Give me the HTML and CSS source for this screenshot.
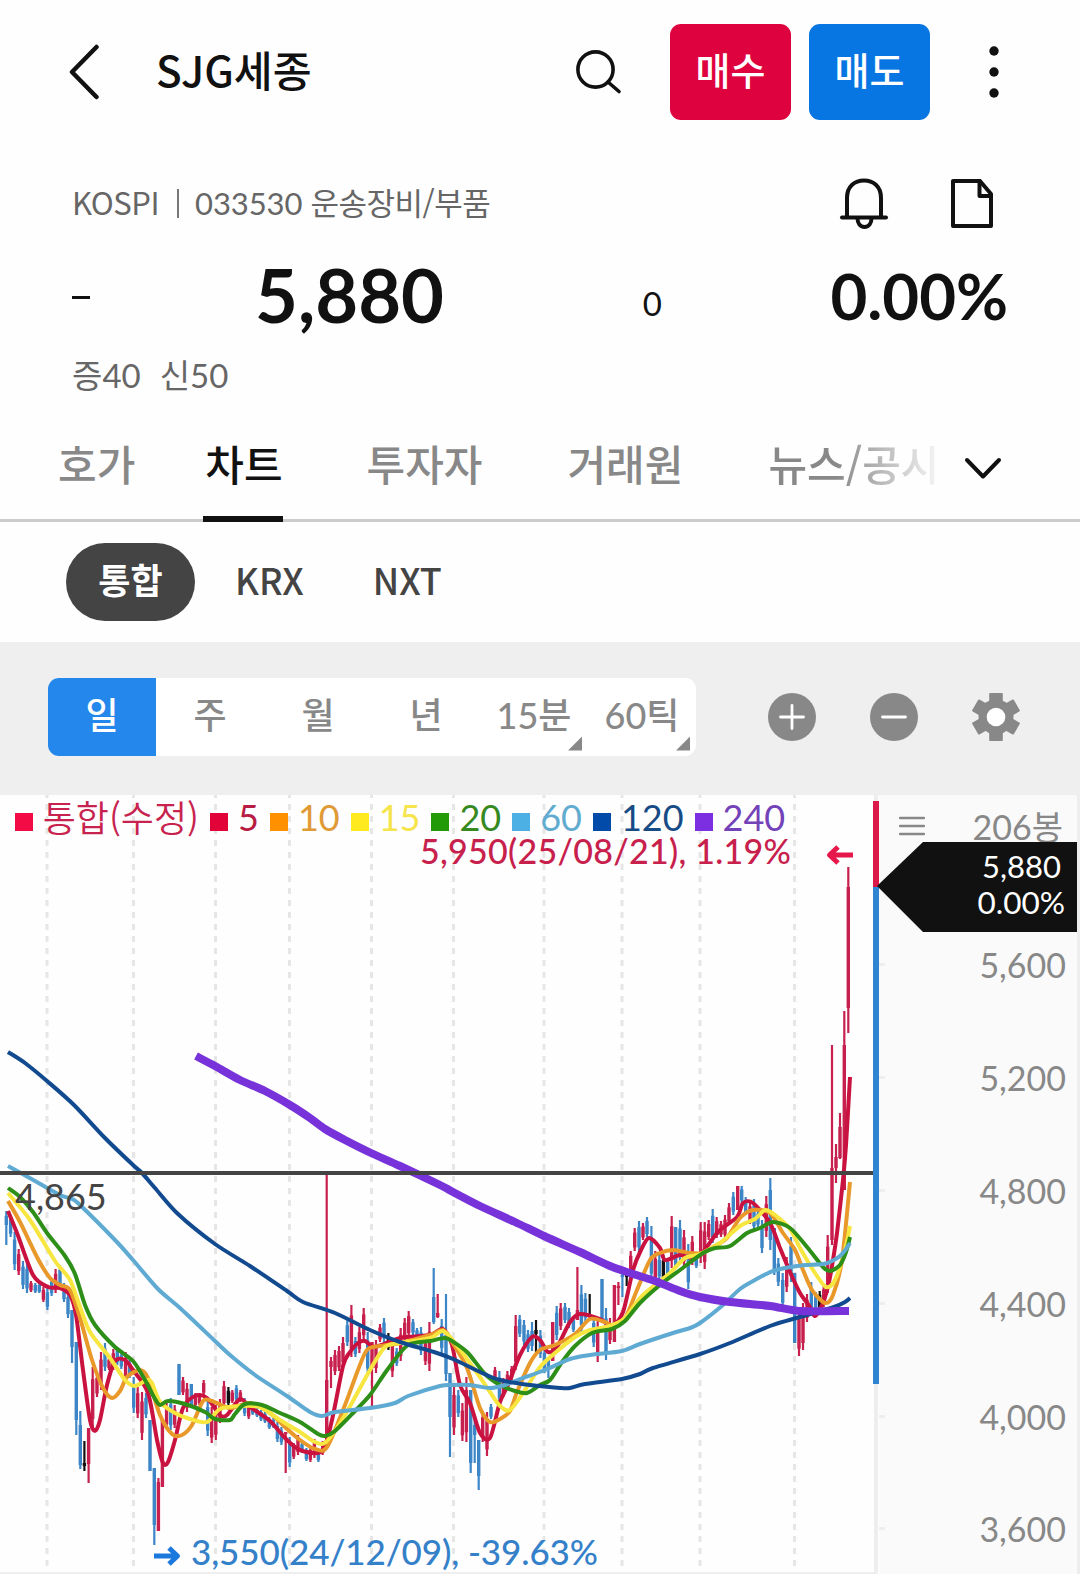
FILE: index.html
```html
<!DOCTYPE html>
<html lang="ko">
  <head>
    <meta charset="UTF-8" />
    <meta name="viewport" content="width=device-width, initial-scale=1.0" />
    <title>SJG세종 - 차트</title>
    <link rel="stylesheet" href="styles.css">
  </head>
  <body>
    <!-- Top bar -->
    <header class="topbar">
      <svg class="back" width="32" height="56" viewBox="0 0 32 56">
        <path d="M28.5 3 L4 28 L28.5 53" />
      </svg>
      <h1 class="title">SJG세종</h1>
      <svg class="search" width="50" height="50" viewBox="0 0 50 50">
        <circle cx="22.5" cy="22.5" r="17.6" />
        <path d="M35 35 L46 44.5" />
      </svg>
      <button class="order buy">매수</button>
      <button class="order sell">매도</button>
      <svg class="more" width="12" height="56" viewBox="0 0 12 56">
        <circle cx="6" cy="7" r="4.7" />
        <circle cx="6" cy="28" r="4.7" />
        <circle cx="6" cy="49" r="4.7" />
      </svg>
    </header>

    <!-- Stock summary -->
    <section class="summary">
      <div class="info">
        <span>KOSPI</span>
        <span class="bar"></span>
        <span><span class="num">033530</span> 운송장비/부품</span>
        <svg class="bell" width="50" height="54" viewBox="0 0 50 54">
          <path d="M8 40 V21 C8 9 16 3.5 25 3.5 S42 9 42 21 V40" />
          <path d="M3 40.5 H47" />
          <path d="M18.5 41 C18.5 46 21 50 25.5 50 S32.5 46 32.5 41" />
        </svg>
        <svg class="note" width="46" height="54" viewBox="0 0 46 54">
          <path d="M4 4 H31 L42 17 V49 H4 Z" />
          <path d="M30.5 4 V19 H42" />
        </svg>
      </div>
      <div class="price-row">
        <span class="dash"></span>
        <span class="price">5,880</span>
        <span class="diff">0</span>
        <span class="rate">0.00%</span>
      </div>
      <div class="margin-row">
        <span>증<span class="num">40</span></span>
        <span>신<span class="num">50</span></span>
      </div>
    </section>

    <!-- Tabs -->
    <nav class="tabs">
      <a class="tab">호가</a>
      <a class="tab active">차트</a>
      <a class="tab">투자자</a>
      <a class="tab">거래원</a>
      <a class="tab fade">뉴스/공시</a>
      <svg class="expand" width="38" height="24" viewBox="0 0 38 24">
        <path d="M3 3 L19 19.5 L35 3" />
      </svg>
    </nav>

    <div class="markets">
      <span class="market on">통합</span>
      <span class="market">KRX</span>
      <span class="market">NXT</span>
    </div>

    <!-- Period toolbar -->
    <div class="toolbar">
      <div class="periods">
        <span class="period on">일</span>
        <span class="period">주</span>
        <span class="period">월</span>
        <span class="period">년</span>
        <span class="period more-opt"><span class="num">15</span>분</span>
        <span class="period more-opt"><span class="num">60</span>틱</span>
      </div>
      <svg class="tool" width="50" height="50" viewBox="-25 -25 50 50">
        <circle r="24" />
        <path d="M-11.5 0 H11.5 M0 -11.5 V11.5" />
      </svg>
      <svg class="tool" width="50" height="50" viewBox="-25 -25 50 50">
        <circle r="24" />
        <path d="M-11.5 0 H11.5" />
      </svg>
      <svg class="tool gear" width="50" height="50" viewBox="-25 -25 50 50">
        <circle r="17.5" />
        <g id="tooth">
          <rect x="-6.8" y="-24" width="13.6" height="48" rx="1" />
        </g>
        <use href="#tooth" transform="rotate(60)" />
        <use href="#tooth" transform="rotate(120)" />
        <circle class="hole" r="9.3" />
      </svg>
    </div>

    <!-- Chart -->
    <main class="chart">
      <svg class="plot" width="879" height="779" viewBox="0 795 879 779">
        <path class="grid" d="M47 795V1574M133.5 795V1574M215.5 795V1574M289.5 795V1574M371.5 795V1574M453.5 795V1574M544 795V1574M622 795V1574M700 795V1574M794.5 795V1574" />
        <path class="frame" d="M876 795V1574M0 1574H876" />
        <g id="candles"></g>
        <g id="averages"></g>

        <path class="level" d="M0 1173H876" />
        <path class="range up" d="M876 801V887" />
        <path class="range down" d="M876 887V1384" />

        <text class="level-text" x="15" y="1210">4,865</text>
        <text class="high-text" x="420" y="864" textLength="371">5,950(25/08/21), 1.19%</text>
        <path class="arrow high" d="M853 855H830M838 847L829.5 855L838 863" />
        <text class="low-text" x="191" y="1565" textLength="407">3,550(24/12/09), -39.63%</text>
        <path class="arrow low" d="M154 1556H177M169 1548L177.5 1556L169 1564" />
      </svg>

      <div class="legend">
        <span class="key all"><i></i>통합(수정)</span>
        <span class="key k5"><i></i>5</span>
        <span class="key k10"><i></i>10</span>
        <span class="key k15"><i></i>15</span>
        <span class="key k20"><i></i>20</span>
        <span class="key k60"><i></i>60</span>
        <span class="key k120"><i></i>120</span>
        <span class="key k240"><i></i>240</span>
      </div>

      <aside class="axis">
        <div class="count">
          <svg width="26" height="20" viewBox="0 0 26 20">
            <path d="M1 2H25M1 10H25M1 18H25" />
          </svg>
          <span><span class="num">206</span>봉</span>
        </div>
        <div class="labels">
          <span>5,600</span>
          <span>5,200</span>
          <span>4,800</span>
          <span>4,400</span>
          <span>4,000</span>
          <span>3,600</span>
        </div>
        <div class="tag">
          <span>5,880</span>
          <span class="tag-rate">0.00%</span>
        </div>
      </aside>
    </main>

    <script src="chart.js"></script>
  </body>
</html>
```
FILE: styles.css
```css
* {
  box-sizing: border-box;
}

body {
  margin: 0;
  width: 1080px;
  height: 1574px;
  overflow: hidden;
  background-color: #fefefe;
  color: #111;
  font-family: "Noto Sans CJK KR", sans-serif;
}

svg {
  display: block;
  flex: none;
  fill: none;
  stroke: #111;
  stroke-width: 3.6;
  stroke-linecap: round;
  stroke-linejoin: round;
}

.num {
  font-family: Lato, sans-serif;
}

/* Top bar */
.topbar {
  display: flex;
  align-items: center;
  height: 144px;
  padding-left: 68px;
}

.back {
  stroke-width: 4.5;
}

.title {
  flex: 1;
  margin: -7px 0 0 56px;
  font-size: 42.3px;
  font-weight: 500;
  line-height: 60px;
}

.search {
  margin-right: 47px;
}

.order {
  width: 121px;
  height: 96px;
  margin-right: 18px;
  padding: 0 0 7px;
  border: none;
  border-radius: 11px;
  color: white;
  font-family: inherit;
  font-size: 38px;
  font-weight: 500;
}

.buy {
  background-color: #de023f;
}

.sell {
  background-color: #0775e2;
}

.more {
  margin: 0 80px 0 40px;
  fill: #111;
  stroke: none;
}

/* Stock summary */
.summary {
  height: 272px;
  padding: 29px 73px 0 72px;
  color: #666;
}

.info {
  display: flex;
  align-items: center;
  height: 60px;
  font-size: 31px;
  letter-spacing: -0.5px;
}

.info > span {
  margin-top: -3px;
}

.info .num {
  letter-spacing: -0.1px;
}

.info .bar {
  width: 2px;
  height: 29px;
  margin: 0 16px 0 18px;
  background-color: #777;
}

.bell {
  margin: 1px 0 0 auto;
}

.note {
  margin: 2px 12px 0 60px;
}

.bell,
.note {
  stroke-width: 4;
}

.price-row {
  display: grid;
  grid-template-columns: 18px 354px 218px 1fr;
  align-items: start;
  height: 108px;
  margin-right: -1px;
  padding-top: 2px;
  color: #111;
  font-family: Lato, sans-serif;
  line-height: 106px;
  text-align: right;
}

.dash {
  height: 3px;
  margin-top: 61px;
  background-color: #111;
}

.price {
  margin-top: 7px;
  font-size: 74px;
  font-weight: 700;
}

.diff {
  margin-top: 15px;
  font-size: 33px;
}

.rate {
  margin-top: 8px;
  font-size: 63.5px;
  font-weight: 700;
}

.margin-row {
  display: flex;
  gap: 19px;
  margin-top: 5px;
  font-size: 33px;
  line-height: 56px;
}

/* Tabs */
.tabs {
  display: flex;
  height: 106px;
  padding-left: 58px;
  border-bottom: 3px solid #ccc;
}

.tab {
  height: 106px;
  margin-right: 68px;
  color: #888;
  font-size: 42px;
  font-weight: 500;
  line-height: 94px;
}

.tab.active {
  margin-right: 84px;
  padding-left: 2px;
  border-bottom: 6px solid #111;
  color: #111;
}

.tab:nth-child(3),
.tab:nth-child(4) {
  margin-right: 85px;
}

.tab.fade {
  width: 170px;
  margin-right: 0;
  white-space: nowrap;
  -webkit-mask-image: linear-gradient(to right, #000 40%, transparent 105%);
  mask-image: linear-gradient(to right, #000 40%, transparent 105%);
}

.expand {
  margin: 41px 0 0 26px;
  stroke-width: 4;
}

/* Market filter */
.markets {
  display: flex;
  align-items: center;
  height: 120px;
  padding-left: 66px;
  font-size: 36px;
}

.market {
  margin-right: 69px;
  padding-bottom: 6px;
  color: #444;
  font-weight: 500;
  line-height: 75px;
}

.market.on {
  width: 129px;
  height: 78px;
  margin-right: 40px;
  border-radius: 39px;
  background-color: #444;
  color: white;
  font-size: 35px;
  font-weight: 700;
  line-height: 72px;
  text-align: center;
}

/* Period toolbar */
.toolbar {
  display: flex;
  align-items: center;
  height: 153px;
  padding: 0 0 4px 48px;
  background-color: #efefef;
}

.periods {
  display: flex;
  width: 648px;
  margin-right: 19px;
  border-radius: 11px;
  background-color: white;
  overflow: hidden;
}

.period {
  position: relative;
  width: 108px;
  height: 78px;
  color: #888;
  font-size: 36px;
  font-weight: 500;
  line-height: 70px;
  text-align: center;
}

.period.on {
  background-color: #2487eb;
  color: white;
}

.more-opt::after {
  content: "";
  position: absolute;
  right: 6px;
  bottom: 5px;
  width: 14px;
  height: 14px;
  background-color: #888;
  clip-path: polygon(100% 0, 100% 100%, 0 100%);
}

.tool {
  margin-left: 52px;
  fill: #888;
  stroke: none;
}

.tool path {
  stroke: white;
  stroke-width: 2.8;
}

.tool .hole {
  fill: white;
}

/* Chart */
.chart {
  position: relative;
  display: flex;
  height: 779px;
}

.plot {
  stroke-linecap: butt;
}

.grid {
  stroke: #e6e6e6;
  stroke-width: 3;
  stroke-dasharray: 6 6;
  stroke-dashoffset: 3;
}

.frame {
  stroke: #eee;
  stroke-width: 4;
}

.wick {
  stroke-width: 2.2;
}

.body {
  stroke-width: 3.4;
}

.r {
  stroke: #c8204e;
}

.b {
  stroke: #3c86c8;
}

.k {
  stroke: #111;
}

.ma {
  stroke-width: 4;
}

.ma5 {
  stroke: #c9123f;
}

.ma10 {
  stroke: #e9982a;
}

.ma15 {
  stroke: #f7e640;
}

.ma20 {
  stroke: #2d8f18;
}

.ma60 {
  stroke: #5eaad3;
}

.ma120 {
  stroke: #124a90;
}

.ma240 {
  stroke: #7832da;
  stroke-width: 8;
}

.level {
  stroke: #444;
  stroke-width: 4;
}

.range {
  stroke-width: 6;
}

.range.up {
  stroke: #dc1a49;
}

.range.down {
  stroke: #3085d3;
}

.plot text {
  stroke: none;
  font-family: Lato, sans-serif;
}

.level-text {
  fill: #444;
  font-size: 36px;
}

.high-text {
  fill: #c8204c;
  font-size: 34px;
  font-weight: 500;
}

.low-text {
  fill: #3581c9;
  font-size: 35px;
  font-weight: 500;
}

.arrow {
  stroke-width: 5;
}

.arrow.high {
  stroke: #e6174b;
}

.arrow.low {
  stroke: #1b78dc;
}

.legend {
  position: absolute;
  top: 0;
  left: 15px;
  display: flex;
  font-family: Lato, sans-serif;
  font-size: 36px;
  line-height: 44px;
  white-space: nowrap;
}

.key {
  display: flex;
  margin-right: 11px;
}

.key i {
  width: 18px;
  height: 18px;
  margin: 18px 10px 0 0;
}

.all {
  width: 184px;
  color: #c8234f;
  font-family: "Noto Sans CJK KR", sans-serif;
  font-weight: 350;
  line-height: 42px;
}

.all i {
  background-color: #f20b45;
}

.k5 {
  color: #b81c44;
}

.k5 i {
  background-color: #e20338;
}

.k10 {
  color: #e09a35;
}

.k10 i {
  background-color: #ff9100;
}

.k15 {
  color: #f5e44a;
}

.k15 i {
  background-color: #ffea20;
}

.k20 {
  color: #35891f;
}

.k20 i {
  background-color: #229a08;
}

.k60 {
  color: #62abd0;
}

.k60 i {
  background-color: #4cb0e5;
}

.k120 {
  color: #174b86;
}

.k120 i {
  background-color: #034ba9;
}

.k240 {
  color: #7442b8;
}

.k240 i {
  background-color: #7b2fe0;
}

/* Price axis */
.axis {
  position: relative;
  width: 201px;
  border-right: 3px solid #eee;
  background-color: #fafafa;
  color: #888;
  font-size: 34px;
}

.count {
  display: flex;
  align-items: center;
  justify-content: space-between;
  height: 61px;
  padding: 0 14px 0 20px;
}

.count svg {
  stroke: #888;
  stroke-width: 2.4;
}

.labels {
  margin-top: 52px;
  font-family: Lato, sans-serif;
}

.labels span {
  display: flex;
  align-items: center;
  justify-content: flex-end;
  height: 112.9px;
  padding-right: 11px;
}

.labels span::before {
  content: "";
  width: 6px;
  height: 3px;
  margin-right: auto;
  background-color: #eee;
}

.tag {
  position: absolute;
  top: 47px;
  left: -2px;
  display: flex;
  flex-direction: column;
  align-items: flex-end;
  width: 200px;
  height: 90px;
  padding: 6px 16px 0 0;
  background-color: #111;
  clip-path: polygon(0 49%, 23% 0, 100% 0, 100% 100%, 23% 100%);
  color: white;
  font-family: Lato, sans-serif;
  font-size: 31px;
  line-height: 36px;
}

.tag-rate {
  margin-right: -4px;
  font-size: 31.5px;
}
```
FILE: chart.js
```js
// colour (r up, b down, k flat), x, high, low, optional body top and bottom
const candles = `
b 6.3 1211 1245 1216 1225|b 10.6 1215 1237|b 14.6 1232 1270|r 18.7 1249 1275|b 23 1261 1289|b 27 1263 1293|
r 31 1281 1292|b 35.3 1283 1293|b 39.3 1283 1293|r 43.4 1287 1302|b 47.4 1288 1310|b 51.6 1278 1296|
r 55.6 1269 1293|b 60 1265 1288|b 64 1283 1302|b 68 1292 1318|b 72 1310 1363 1310 1347|b 76.3 1342 1435 1342 1420|
b 80.3 1411 1469 1425 1465|k 84.4 1441 1471 1463 1466|r 88.6 1428 1483 1428 1464|r 92.7 1367 1428|r 97 1373 1397|
r 101 1352 1390|b 105 1343 1371|r 109 1357 1370|r 113.3 1349 1370|b 117.3 1347 1365|b 121.3 1352 1369|
r 125.6 1352 1381|b 129.7 1360 1378|b 133.7 1377 1413|r 137.7 1387 1418|r 142 1392 1440|b 146 1393 1418|
b 150 1420 1471 1420 1471|b 154.3 1468 1545 1468 1525|r 158.4 1478 1531 1482 1531|r 162.4 1420 1487 1420 1487|
r 166.6 1403 1428|b 170.7 1398 1430|r 174.7 1405 1428|b 179 1364 1395 1364 1395|r 183 1377 1395|r 187 1383 1412|
b 191.3 1384 1407 1384 1407|r 195.4 1393 1407|r 199.4 1393 1405|r 203.7 1380 1395|b 207.7 1400 1436|r 211.7 1407 1443|
r 215.8 1405 1440|r 220 1399 1423|r 224 1381 1407|k 228.4 1387 1406|r 232.3 1390 1403|b 236.4 1385 1402|
r 240.4 1390 1402|b 244.6 1398 1416|r 248.7 1402 1419|b 252.7 1405 1415|b 257 1408 1417|b 261 1410 1421|
b 265 1412 1423|b 269.3 1417 1429|b 273.4 1418 1428|b 277.4 1422 1442|b 281.4 1427 1445|r 285.7 1432 1473 1432 1434|
b 289.7 1437 1467|r 293.7 1443 1459|r 298 1435 1455|b 302 1442 1453|b 306.4 1448 1461|r 310.4 1447 1462|
r 314.4 1439 1458|b 318.4 1450 1462|r 322.7 1441 1455|r 326.7 1173 1443 1380 1443|r 331 1357 1388 1361 1367|
r 335 1350 1375|r 339 1346 1371|r 343 1337 1367|b 347.3 1320 1346|r 351.4 1305 1357|b 355.4 1337 1357|
r 359.4 1327 1353|r 363.7 1308 1340|b 367.7 1332 1375|r 372 1342 1407 1342 1368|r 376 1340 1373|r 380 1324 1342|
b 384 1318 1342|k 388.4 1333 1350|r 392.4 1338 1377|b 396.7 1348 1366|r 400.7 1328 1361|r 404.7 1318 1342|
r 408.7 1311 1337|b 413 1319 1335|b 417 1328 1340|b 421 1327 1355|r 425.4 1338 1365|r 429.4 1322 1371|
b 433.7 1268 1324 1297 1322|r 437.7 1294 1318 1313 1317|b 441.7 1319 1353|b 446 1294 1381 1335 1374|
b 450 1373 1457 1373 1417|r 454 1385 1435|b 458.3 1390 1417|r 462.4 1403 1441|r 466.4 1377 1442|
b 470.7 1390 1473 1390 1463|b 474.7 1417 1463 1425 1435|b 478.7 1440 1490 1440 1476|r 482.7 1411 1442|r 487 1412 1456|
b 491 1404 1419|r 495 1367 1383|b 499.4 1371 1403|r 503.4 1378 1397|r 507.4 1371 1390|r 511.7 1366 1380|
r 515.7 1315 1370|b 519.7 1315 1337|b 524 1320 1345|b 528 1330 1352|b 532 1322 1351 1331 1346|k 536 1320 1352 1330 1334|
b 540.4 1330 1358|b 544.4 1348 1373|b 548.4 1357 1378 1359 1369|r 552.7 1322 1361 1322 1361|b 556.7 1306 1340|
r 560.7 1303 1330|b 565 1303 1323|b 569 1308 1328|b 573.4 1317 1332|r 577.4 1267 1320 1310 1320|b 581.4 1285 1332|
b 585.4 1293 1322|k 589.7 1294 1318 1315 1317|b 593.7 1317 1347|r 597.7 1319 1362|b 602 1279 1320 1279 1320|
b 606 1308 1360|r 610 1318 1344|r 614.4 1285 1342 1285 1342|r 618.4 1282 1305 1286 1288|b 622.4 1272 1297 1275 1277|
k 626.7 1275 1286 1275 1277|r 630.7 1251 1275|r 634.7 1228 1251|b 639 1221 1252|r 643 1223 1240|b 647 1217 1237|
b 651.4 1226 1282|r 655.3 1251 1290|b 659.3 1255 1280|k 663.4 1255 1282|b 667.7 1258 1278|r 671.7 1216 1268|
b 675.7 1227 1267 1227 1267|b 680 1220 1263|r 684 1230 1267|b 688.3 1244 1289|r 692.3 1236 1265|b 696.3 1254 1268|
r 700.7 1222 1263|r 704.7 1222 1269|r 708.7 1220 1240|b 712.7 1209 1243|r 716.7 1217 1238|r 721 1221 1237|
r 725 1215 1238|r 729 1203 1225|b 733.3 1192 1215|r 737.7 1186 1210 1186 1210|b 741.7 1186 1203|b 745.7 1197 1215|
r 750 1202 1224|b 754 1199 1231|b 758 1210 1227|b 762 1220 1253|r 766.3 1196 1237|b 770.3 1178 1250 1190 1240|
b 774.3 1228 1275 1228 1272|b 778.3 1258 1286|b 782.7 1273 1308|r 786.7 1257 1292|b 791 1237 1282|
b 794.7 1273 1343 1273 1343|r 799 1307 1356|r 803 1303 1350|r 807 1294 1322|b 811.3 1282 1312|b 815.7 1292 1310|
k 819.7 1291 1310|r 823.7 1285 1307|r 827.7 1235 1293|r 832 1045 1245 1168 1240|r 836 1144 1183 1157 1168|
r 840 1113 1159 1127 1158|r 844.3 1011 1190 1045 1190|r 848.3 867 1033 887 1008`;

// moving averages, drawn in this order
const averages = {
  ma5: "8,1211 17,1233 33,1275 48,1287 60,1288 70,1295 76,1315 83,1370 90,1420 95,1431 100,1420 107,1385 115,1361 125,1360 133,1370 148,1393 157,1440 163,1463 168,1462 175,1440 183,1408 195,1396 207,1398 220,1415 227,1415 240,1399 250,1407 270,1421 285,1438 300,1450 322,1451 332,1420 343,1366 350,1352 358,1343 365,1341 375,1347 400,1338 430,1335 443,1329 452,1345 460,1385 470,1403 480,1433 490,1438 500,1402 508,1385 520,1355 532,1337 540,1340 548,1352 557,1347 570,1322 580,1314 600,1319 612,1326 623,1312 633,1270 641,1250 649,1238 660,1248 665,1260 680,1255 693,1258 703,1252 718,1232 737,1217 743,1203 753,1203 770,1223 780,1248 790,1272 800,1293 810,1307 815,1316 823,1303 829,1282 833,1260 837,1233 843,1180 846,1145 850,1077",
  ma10: "8,1201 20,1222 38,1259 50,1278 60,1285 70,1290 80,1318 92,1360 103,1388 112,1398 120,1391 127,1377 140,1370 148,1378 160,1415 172,1434 182,1435 192,1425 203,1401 212,1401 230,1408 250,1403 270,1413 285,1427 300,1440 315,1449 327,1447 345,1405 358,1370 367,1350 380,1346 400,1343 430,1335 443,1330 452,1342 467,1368 480,1408 490,1422 500,1419 510,1411 517,1392 530,1363 540,1350 555,1345 575,1334 590,1319 605,1322 612,1325 625,1318 637,1290 650,1260 660,1253 673,1250 690,1253 703,1253 713,1247 727,1238 740,1218 753,1210 770,1213 783,1233 795,1250 803,1270 812,1290 825,1303 833,1295 842,1260 850,1182",
  ma15: "8,1193 30,1220 55,1261 70,1280 80,1307 90,1332 110,1358 125,1380 135,1386 147,1380 152,1383 160,1402 175,1413 190,1419 207,1422 220,1409 240,1406 260,1407 280,1420 300,1432 315,1442 326,1442 345,1415 370,1370 385,1347 400,1343 430,1338 443,1331 455,1343 475,1370 490,1392 500,1406 510,1410 525,1390 540,1367 555,1353 575,1337 590,1330 610,1326 625,1318 640,1298 655,1285 670,1273 685,1258 700,1254 720,1243 740,1226 755,1219 765,1210 775,1215 790,1229 800,1248 815,1273 826,1287 835,1280 845,1250 850,1226",
  ma20: "8,1188 20,1197 33,1212 47,1233 65,1256 75,1274 85,1305 95,1325 115,1347 133,1361 145,1380 155,1399 160,1405 168,1401 185,1404 205,1412 215,1419 230,1420 235,1414 245,1404 262,1405 280,1413 300,1422 318,1434 325,1436 335,1431 355,1411 370,1395 385,1373 400,1353 410,1344 430,1341 445,1338 455,1343 468,1353 485,1374 500,1385 515,1391 527,1393 540,1385 550,1380 562,1362 575,1346 592,1333 612,1329 625,1321 640,1303 660,1285 680,1270 703,1253 715,1248 730,1246 747,1233 760,1228 773,1222 790,1228 807,1247 823,1267 830,1271 840,1265 846,1252 850,1237",
  ma60: "8,1166 35,1181 60,1195 72,1199 80,1205 115,1240 133,1260 158,1289 180,1308 215,1341 230,1355 255,1375 287,1396 310,1412 322,1416 335,1412 370,1408 395,1403 408,1396 440,1386 453,1385 470,1385 490,1388 505,1385 520,1379 545,1370 570,1359 590,1355 622,1351 640,1344 673,1333 690,1328 700,1323 723,1305 740,1289 755,1280 773,1271 797,1266 823,1264 832,1261 840,1256 846,1249 850,1243",
  ma120: "8,1052 25,1063 47,1081 74,1105 105,1138 133,1165 142,1173 155,1188 178,1214 215,1244 250,1266 287,1291 303,1302 335,1313 370,1330 400,1342 434,1352 453,1359 480,1372 500,1380 530,1385 560,1388 570,1388 585,1384 622,1379 640,1374 653,1368 700,1354 730,1343 770,1326 800,1317 834,1307 845,1302 850,1298",
  ma240: "196,1056 215,1066 240,1080 265,1091 290,1105 310,1118 325,1129 345,1140 371,1153 400,1166 440,1185 453,1192 480,1206 515,1222 544,1236 580,1252 610,1266 630,1273 655,1281 680,1291 700,1297 730,1302 770,1306 800,1311 849,1311",
};

function line(cls, x, y1, y2) {
  return `<path class="${cls}" d="M${x} ${y1}V${y2}" />`;
}

// rounds the corners between the points of an average
function smooth(points) {
  const p = points.split(" ").map((s) => s.split(",").map(Number));
  let d = `M${p[0]}`;
  for (let i = 0; i < p.length - 1; i++) {
    const a = p[i - 1] || p[i];
    const b = p[i];
    const c = p[i + 1];
    const e = p[i + 2] || c;
    d += `C${b[0] + (c[0] - a[0]) / 7} ${b[1] + (c[1] - a[1]) / 7}`;
    d += ` ${c[0] - (e[0] - b[0]) / 7} ${c[1] - (e[1] - b[1]) / 7} ${c[0]} ${c[1]}`;
  }
  return d;
}

let out = "";
candles.split("|").forEach(function (row) {
  const [color, x, high, low, top, bottom] = row.trim().split(" ");
  const h = Number(high);
  const l = Number(low);
  const t = top ? Number(top) : h + (l - h) * 0.2;
  const b = bottom ? Number(bottom) : h + (l - h) * 0.85;
  out += line("wick " + color, x, h, l) + line("body " + color, x, t, b);
});
document.getElementById("candles").innerHTML = out;

document.getElementById("averages").innerHTML = Object.keys(averages)
  .map((name) => `<path class="ma ${name}" d="${smooth(averages[name])}" />`)
  .join("");
```
